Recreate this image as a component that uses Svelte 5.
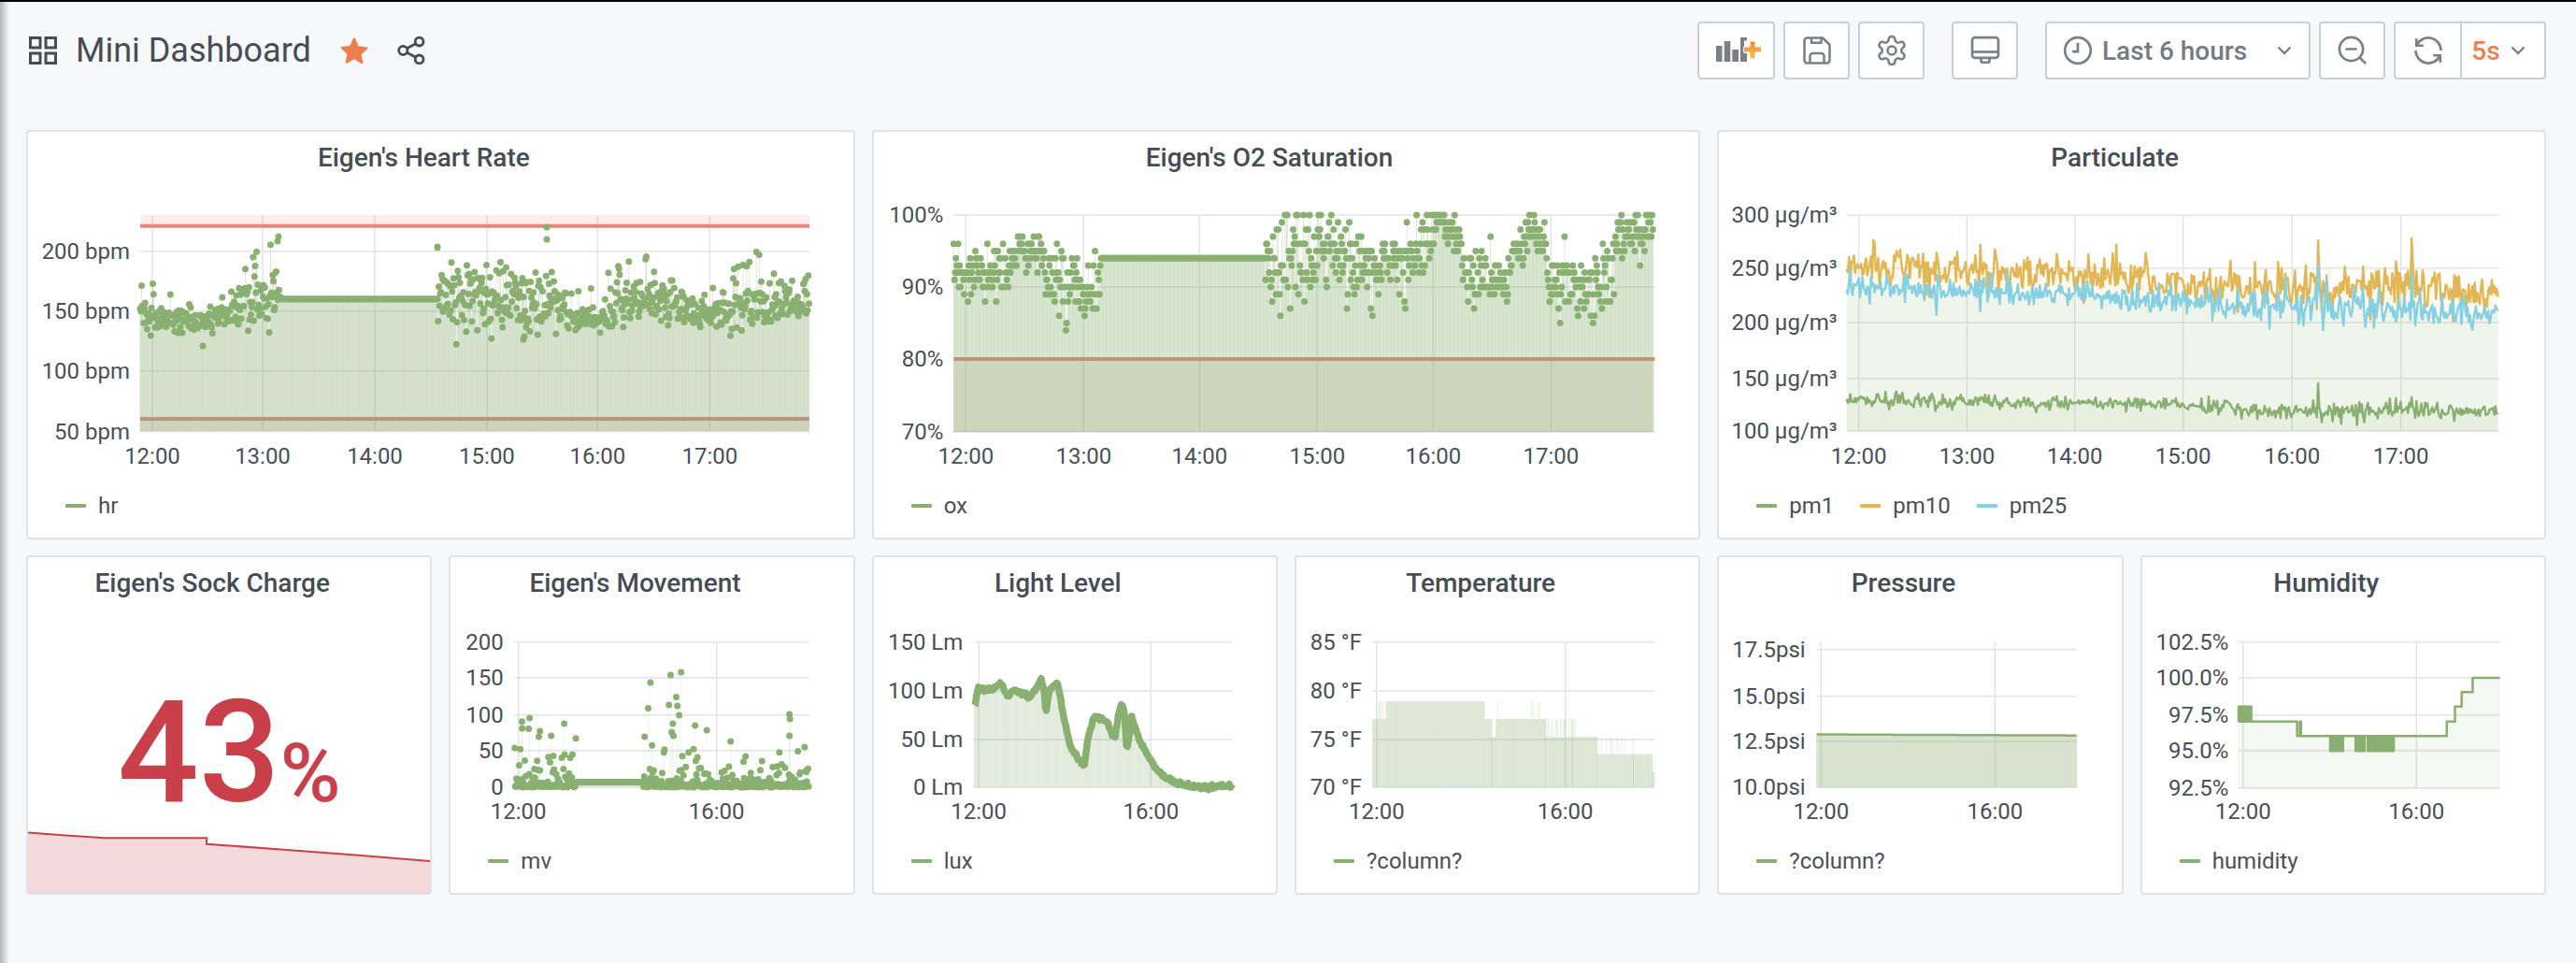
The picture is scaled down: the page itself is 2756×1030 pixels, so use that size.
<script>
  const GREEN = '#89af71'
  const YELLOW = '#e3b655'
  const BLUE = '#85d0e3'
  const FILL = 'rgba(137, 175, 113, 0.3)'
  const LOW_LINE = '#c1927a'
  const LOW_FILL = 'rgba(150, 130, 70, 0.13)'
  const DOT = 7

  const colX = i => 28 + i * 452.333
  const f = n => n.toFixed(1)

  function rng(seed) {
    let a = seed >>> 0
    return () => {
      a = (a + 0x6d2b79f5) >>> 0
      let t = a
      t = Math.imul(t ^ (t >>> 15), t | 1)
      t ^= t + Math.imul(t ^ (t >>> 7), t | 61)
      return ((t ^ (t >>> 14)) >>> 0) / 4294967296
    }
  }

  function gauss(r) {
    return Math.sqrt(-2 * Math.log(r() + 1e-6)) * Math.cos(2 * Math.PI * r())
  }

  // anchors: rows starting with x, the other columns are interpolated
  function at(anchors, x) {
    let i = 1
    while (i < anchors.length - 1 && anchors[i][0] < x) i++
    const a = anchors[i - 1]
    const b = anchors[i]
    const t = b[0] === a[0] ? 0 : Math.min(1, Math.max(0, (x - a[0]) / (b[0] - a[0])))
    return a.map((v, k) => v + (b[k] - v) * t)
  }

  const dots = pts => pts.map(([x, y]) => `M${f(x)} ${f(y)}h0`).join('')
  const bars = (pts, y0) => pts.map(([x, y]) => `M${f(x)} ${y0}V${f(y)}`).join('')
  const line = pts => 'M' + pts.map(([x, y]) => `${f(x)} ${f(y)}`).join('L')
  const area = (pts, y0) => `${line(pts)}L${f(pts[pts.length - 1][0])} ${y0}L${f(pts[0][0])} ${y0}Z`
  const rect = (x0, x1, y0, y1) => `M${x0} ${y0}H${x1}V${y1}H${x0}Z`

  function scatter(seed, anchors, step) {
    const r = rng(seed)
    const pts = []
    const end = anchors[anchors.length - 1][0]
    for (let x = anchors[0][0]; x <= end; x += step) {
      const [, cy, sd, up, p] = at(anchors, x)
      pts.push([x, r() < p ? cy - r() * up : cy + gauss(r) * sd])
    }
    return pts
  }

  function jitterLine(seed, anchors, step, spikes = []) {
    const r = rng(seed)
    const pts = []
    const end = anchors[anchors.length - 1][0]
    for (let x = anchors[0][0]; x <= end; x += step) {
      const [, cy, sd] = at(anchors, x)
      const spike = spikes.find(s => Math.abs(s[0] - x) < step / 2)
      pts.push([x, spike ? spike[1] : cy + gauss(r) * sd])
    }
    return pts
  }

  // Heart rate
  const hrPts = scatter(11, [
    [150, 338, 9, 62, 0.16], [215, 343, 5, 30, 0.04], [261, 327, 11, 55, 0.2], [295, 317, 13, 62, 0.3],
    [301, 320, 0, 0, 0], [468, 320, 0, 0, 0],
    [469, 317, 17, 30, 0.18], [571, 320, 17, 30, 0.2], [594, 333, 13, 45, 0.22], [640, 347, 5, 55, 0.14],
    [663, 327, 11, 50, 0.22], [720, 322, 13, 50, 0.25], [743, 338, 6, 20, 0.06], [789, 332, 11, 60, 0.24],
    [818, 327, 13, 60, 0.24], [835, 327, 10, 20, 0.12], [866, 320, 11, 40, 0.25]
  ], 0.75)
  const hrExtra = [[585, 243], [585, 256], [468, 265], [468, 264], [560, 363], [561, 360], [563, 350], [217, 370], [298, 253], [297, 258]]

  // O2 saturation, whole percents
  const oxY = v => 384 - (v - 80) * 7.7
  const oxR = rng(23)
  const oxAnchors = [
    [1020, 91.5, 2.2], [1079, 92, 2], [1091, 95, 1.5], [1114, 95, 1.5], [1125, 91, 2.5], [1176, 90.5, 2.5],
    [1177, 94, 0], [1352, 94, 0], [1353, 94, 3.3], [1429, 95, 3.5], [1435, 93.5, 2.5], [1504, 92.5, 2.5],
    [1521, 96, 2.5], [1538, 99, 1], [1556, 97, 1.5], [1570, 92, 2], [1613, 90, 2], [1619, 95, 1.5],
    [1636, 98, 1.2], [1653, 95, 1.5], [1662, 90, 2], [1722, 90.5, 2.2], [1731, 97, 2], [1770, 98.5, 1.5]
  ]
  const oxPts = []
  for (let x = 1020; x <= 1768; x += 0.8) {
    const [, c, sd] = at(oxAnchors, x)
    oxPts.push([x, oxY(Math.min(100, Math.round(c + gauss(oxR) * sd)))])
  }

  // Particulate
  const pm10 = jitterLine(31, [[1976, 283, 11], [2104, 290, 10], [2220, 292, 10], [2336, 302, 11], [2440, 312, 14], [2580, 306, 13], [2674, 317, 10]], 1.3, [[2480, 257], [2580, 255]])
  const pm25 = jitterLine(32, [[1976, 307, 7], [2104, 312, 7], [2220, 315, 7], [2336, 322, 8], [2440, 328, 10], [2580, 330, 9], [2674, 335, 7]], 1.3, [[2480, 283], [2580, 292]])
  const pm1 = jitterLine(33, [[1976, 427, 4], [2104, 430, 4], [2220, 431, 3.5], [2336, 433, 4], [2440, 440, 5], [2580, 438, 5], [2674, 440, 4]], 1.3, [[2480, 410], [2580, 425]])

  // Movement
  const mvR = rng(47)
  const mvPts = []
  for (let x = 551; x <= 866; x += 0.6) {
    if (x > 617 && x < 689) {
      mvPts.push([x, 836.7])
      continue
    }
    const scale = x < 617 ? 18 : x < 757 ? 26 : x < 825 ? 7 : 14
    const s = mvR() < 0.55 ? 1.5 : scale
    mvPts.push([x, Math.max(722, 842 + Math.log(mvR() + 1e-6) * s)])
  }
  mvPts.push([729, 719], [716, 754], [725, 755], [567, 768], [604, 774], [845, 764], [845.5, 769], [727, 765], [782, 793], [798, 809], [578, 782], [559, 779], [756.5, 781], [744, 776], [690, 788], [845, 787])

  // Light level
  const lightKnots = [[208, 490], [212, 470], [215, 430], [225, 445], [240, 440], [255, 420], [262, 440], [270, 470], [275, 445], [300, 455], [310, 470], [320, 440], [330, 410], [336, 450], [338, 530], [345, 440], [360, 420], [365, 470], [375, 570], [385, 630], [405, 680], [408, 690], [415, 600], [425, 535], [440, 535], [452, 550], [458, 585], [465, 590], [470, 530], [477, 485], [482, 520], [486, 640], [495, 530], [510, 610], [530, 670], [545, 710], [570, 740], [610, 757], [680, 752]]
    .map(([x, y]) => [920 + x / 1.704, 590 + y / 3, 1.1])
  const lightPts = jitterLine(53, lightKnots, 1.1)

  // Temperature, main level with fainter stripes up to the next one
  const tempR = rng(61)
  const tempZones = [[935, 945, 537, 537, 0], [945, 960, 537, 480, 0.7], [960, 1140, 480, 480, 0], [1140, 1152, 537, 537, 0], [1152, 1160, 595, 595, 0], [1160, 1190, 537, 480, 0.05], [1190, 1250, 537, 480, 0.25], [1250, 1300, 595, 537, 0.6], [1300, 1315, 595, 537, 0.25], [1315, 1345, 595, 595, 0], [1345, 1410, 650, 595, 0.2], [1410, 1445, 650, 650, 0], [1445, 1449, 705, 650, 0.4]]
  const tempPts = []
  let tempAlt = ''
  for (const [a, b, main, alt, p] of tempZones) {
    for (let x = a; x < b; x += 1.7) {
      const px = 920 + x / 1.704
      tempPts.push([px, 590 + main / 3])
      if (tempR() < p) tempAlt += `M${f(px)} ${f(590 + main / 3)}V${f(590 + alt / 3)}`
    }
  }

  // Pressure
  const pressPts = []
  for (let x = 1944; x <= 2222; x += 1) pressPts.push([x, 785.5 + (x - 1944) / 278 * 1.2])

  // Humidity, stepped with solid blocks where it flips between two values
  const humX = x => 1830 + x / 1.693
  const humY = y => 590 + y / 3
  function flip(x0, x1, a, b) {
    const out = []
    for (let x = x0; x < x1; x += 2.2) out.push([x, a], [x, b], [x + 1.1, b], [x + 1.1, a])
    return out
  }
  const humPts = [
    ...flip(956, 980, 545, 497), [1062, 545], [1062, 592], [1067, 592], [1067, 545], [1069, 545], [1069, 592],
    ...flip(1122, 1145, 592, 640), [1168, 592], ...flip(1168, 1185, 592, 640), [1190, 592], ...flip(1190, 1222, 592, 640),
    [1225, 592], ...flip(1225, 1238, 592, 640), [1238, 592], [1333, 592], [1333, 545], [1348, 545], [1348, 497],
    [1360, 497], [1360, 451], [1380, 451], [1380, 405], [1429, 405]
  ].map(([x, y]) => [humX(x), humY(y)])

  const hours = ['12:00', '13:00', '14:00', '15:00', '16:00', '17:00']
  const xTicks = xs => xs.map((x, i) => ({ x, label: xs.length === 2 ? (i ? '16:00' : '12:00') : hours[i] }))

  const topRow = [
    {
      title: "Eigen's Heart Rate", col: 0, span: 2, top: 197, height: 313, labelX: 139, labelY: 488,
      plot: [150, 866, 230, 461.6],
      yTicks: [[268.7, '200 bpm'], [332.7, '150 bpm'], [396.7, '100 bpm'], [461.6, '50 bpm']],
      xTicks: xTicks([163, 281, 401, 521, 639.4, 759.4]),
      layers: [
        { d: bars(hrPts, 461), stroke: FILL, width: 1 },
        { d: rect(150, 866, 230, 242), fill: 'rgba(234, 112, 112, 0.13)' },
        { d: rect(150, 866, 448, 461.6), fill: LOW_FILL },
        { d: `M150 241.7H866`, stroke: '#e5867a', width: 4 },
        { d: `M150 448H866`, stroke: LOW_LINE, width: 4 },
        { d: dots(hrPts.concat(hrExtra)), stroke: GREEN, width: DOT, cap: 'round' }
      ],
      legend: [{ name: 'hr', color: GREEN }]
    },
    {
      title: "Eigen's O2 Saturation", col: 2, span: 2, top: 197, height: 313, labelX: 1009, labelY: 488,
      plot: [1020, 1770, 230, 462],
      yTicks: [[230, '100%'], [307, '90%'], [384, '80%'], [462, '70%']],
      xTicks: xTicks([1033, 1159, 1283, 1409, 1533, 1659]),
      layers: [
        { d: bars(oxPts, 462), stroke: FILL, width: 1 },
        { d: rect(1020, 1770, 384, 462), fill: LOW_FILL },
        { d: `M1020 384H1770`, stroke: LOW_LINE, width: 4 },
        { d: dots(oxPts), stroke: GREEN, width: DOT, cap: 'round' }
      ],
      legend: [{ name: 'ox', color: GREEN }]
    },
    {
      title: 'Particulate', col: 4, span: 2, top: 197, height: 313, labelX: 1966, labelY: 488,
      plot: [1976, 2674, 230.3, 461],
      yTicks: [[230.3, '300 µg/m³'], [286.7, '250 µg/m³'], [345, '200 µg/m³'], [404.7, '150 µg/m³'], [461, '100 µg/m³']],
      xTicks: xTicks([1989, 2104.7, 2220, 2336, 2452.6, 2569]),
      layers: [
        { d: area(pm1, 461), fill: 'rgba(126, 178, 109, 0.09)' },
        { d: area(pm10, 461), fill: 'rgba(234, 184, 57, 0.09)' },
        { d: area(pm25, 461), fill: 'rgba(110, 208, 224, 0.09)' },
        { d: line(pm1), stroke: GREEN, width: 2.4 },
        { d: line(pm10), stroke: YELLOW, width: 2.4 },
        { d: line(pm25), stroke: BLUE, width: 2.4 }
      ],
      legend: [{ name: 'pm1', color: GREEN }, { name: 'pm10', color: YELLOW }, { name: 'pm25', color: BLUE }]
    }
  ]

  const bottomRow = [
    {
      title: "Eigen's Movement", col: 1, span: 1, top: 652, height: 238, labelX: 539, labelY: 868,
      plot: [551, 866, 686.7, 842.3],
      yTicks: [[686.7, '200'], [725, '150'], [764.7, '100'], [802.7, '50'], [842.3, '0']],
      xTicks: xTicks([555, 767]),
      layers: [
        { d: bars(mvPts, 842), stroke: 'rgba(137, 175, 113, 0.1)', width: 1 },
        { d: dots(mvPts), stroke: GREEN, width: DOT, cap: 'round' }
      ],
      legend: [{ name: 'mv', color: GREEN }]
    },
    {
      title: 'Light Level', col: 2, span: 1, top: 652, height: 238, labelX: 1030, labelY: 868,
      plot: [1042, 1318, 686.7, 842.3],
      yTicks: [[686.7, '150 Lm'], [739, '100 Lm'], [791, '50 Lm'], [842.3, '0 Lm']],
      xTicks: xTicks([1046.8, 1231]),
      layers: [
        { d: bars(lightPts, 842), stroke: 'rgba(137, 175, 113, 0.27)', width: 1 },
        { d: line(lightPts), stroke: GREEN, width: 7.5 }
      ],
      legend: [{ name: 'lux', color: GREEN }]
    },
    {
      title: 'Temperature', col: 3, span: 1, top: 652, height: 238, labelX: 1457, labelY: 868,
      plot: [1468.7, 1770, 686.7, 842.3],
      yTicks: [[686.7, '85 °F'], [739, '80 °F'], [791, '75 °F'], [842.3, '70 °F']],
      xTicks: xTicks([1472.8, 1674.7]),
      layers: [
        { d: bars(tempPts, 842), stroke: 'rgba(137, 175, 113, 0.3)', width: 1 },
        { d: tempAlt, stroke: 'rgba(137, 175, 113, 0.16)', width: 1 }
      ],
      legend: [{ name: '?column?', color: GREEN }]
    },
    {
      title: 'Pressure', col: 4, span: 1, top: 652, height: 238, labelX: 1932, labelY: 868,
      plot: [1944, 2222, 686.7, 842.3],
      yTicks: [[694.7, '17.5psi'], [744.7, '15.0psi'], [792.7, '12.5psi'], [842.3, '10.0psi']],
      xTicks: xTicks([1948.7, 2134.8]),
      layers: [
        { d: bars(pressPts, 842), stroke: 'rgba(137, 175, 113, 0.36)', width: 1 },
        { d: line(pressPts), stroke: GREEN, width: 2.5 }
      ],
      legend: [{ name: '?column?', color: GREEN }]
    },
    {
      title: 'Humidity', col: 5, span: 1, top: 652, height: 238, labelX: 2384, labelY: 868,
      plot: [2394.7, 2674, 686.7, 843],
      yTicks: [[686.7, '102.5%'], [725, '100.0%'], [764.7, '97.5%'], [802.7, '95.0%'], [843, '92.5%']],
      xTicks: xTicks([2399.4, 2584.9]),
      layers: [
        { d: area(humPts, 843), fill: 'rgba(137, 175, 113, 0.09)' },
        { d: line(humPts), stroke: GREEN, width: 2.5 }
      ],
      legend: [{ name: 'humidity', color: GREEN }]
    }
  ]

  const sockLine = [[30, 890.5], [70, 893.5], [112, 896.3], [221, 896.3], [221, 902.7], [300, 908.5], [380, 914.5], [461, 921]]
</script>

{#snippet graph(p)}
  <section class="panel" class:wide={p.span === 2}>
    <h2 class="panel-title">{p.title}</h2>
    <svg class="chart" style="height: {p.height}px" viewBox="{colX(p.col) + 2} {p.top} {p.span === 2 ? 882.67 : 430.33} {p.height}">
      {#each p.yTicks as [y]}
        <path d="M{p.plot[0]} {y}H{p.plot[1]}" class="grid-h" />
      {/each}
      {#each p.xTicks as t}
        <path d="M{t.x} {p.plot[2]}V{p.plot[3]}" class="grid-v" />
      {/each}
      {#each p.layers as l}
        <path d={l.d} fill={l.fill || 'none'} stroke={l.stroke || 'none'} stroke-width={l.width || 0} stroke-linecap={l.cap || 'butt'} stroke-linejoin="round" />
      {/each}
      {#each p.yTicks as [y, label]}
        <text x={p.labelX} {y} text-anchor="end" dominant-baseline="central">{label}</text>
      {/each}
      {#each p.xTicks as t}
        <text x={t.x} y={p.labelY} text-anchor="middle" dominant-baseline="central">{t.label}</text>
      {/each}
    </svg>
    <div class="legend">
      {#each p.legend as item}
        <span class="legend-item">
          <i style="background: {item.color}"></i>{item.name}
        </span>
      {/each}
    </div>
  </section>
{/snippet}

<div class="page">
  <header class="toolbar">
    <div class="title-group">
      <svg class="grid-icon" width="30" height="30" viewBox="0 0 30 30" fill="none" stroke="#464c54" stroke-width="3">
        <rect x="1.5" y="1.5" width="10.5" height="10.5" /><rect x="18" y="1.5" width="10.5" height="10.5" />
        <rect x="1.5" y="18" width="10.5" height="10.5" /><rect x="18" y="18" width="10.5" height="10.5" />
      </svg>
      <h1>Mini Dashboard</h1>
      <svg class="star" width="32" height="30" viewBox="0 0 32 30">
        <path d="M16 2.5l4 8.8 9.5 1.1-7 6.5 1.9 9.4L16 23.1l-8.4 4.7 1.9-9.4-7-6.5 9.5-1.1z" fill="#ed7f4c" stroke="#ed7f4c" stroke-width="2" stroke-linejoin="round" />
      </svg>
      <svg class="share" width="30" height="30" viewBox="0 0 30 30" fill="none" stroke="#464c54" stroke-width="2.8">
        <circle cx="6.3" cy="15" r="4.6" /><circle cx="23.6" cy="5.6" r="4.4" /><circle cx="23.6" cy="24.4" r="4.4" />
        <path d="M10.4 12.8l9.3-5M10.4 17.2l9.3 5" />
      </svg>
    </div>
    <div class="actions">
      <button class="btn add" type="button" aria-label="Add panel">
        <svg width="50" height="28" viewBox="0 0 50 28">
          <defs><linearGradient id="plus" x1="0" y1="0" x2="0" y2="1"><stop offset="0" stop-color="#f08a3c" /><stop offset="1" stop-color="#f6c04a" /></linearGradient></defs>
          <path d="M0 9h6.5v17H0zM8.7 4h6.6v22H8.7zM17.3 13H24v13h-6.7zM26 0h7v3.5h-3V17h3v9h-7z" fill="#7b8087" />
          <path d="M36 4h6v6h6.5v6H42v7h-6v-7h-6.5v-6H36z" fill="url(#plus)" stroke="#fff" stroke-width="1" />
        </svg>
      </button>
      <button class="btn" type="button" aria-label="Save">
        <svg width="36" height="36" viewBox="0 0 24 24" fill="none" stroke="#7b8087" stroke-width="1.7" stroke-linejoin="round">
          <path d="M5 3h11l5 5v11a2 2 0 0 1-2 2H5a2 2 0 0 1-2-2V5a2 2 0 0 1 2-2z" /><path d="M8 3v3.5h7V3" /><path d="M7 21v-5a2 2 0 0 1 2-2h6a2 2 0 0 1 2 2v5" />
        </svg>
      </button>
      <button class="btn" type="button" aria-label="Settings">
        <svg width="36" height="36" viewBox="0 0 24 24" fill="none" stroke="#7b8087" stroke-width="1.7" stroke-linejoin="round">
          <path d="M12.22 2h-.44a2 2 0 0 0-2 2v.18a2 2 0 0 1-1 1.73l-.43.25a2 2 0 0 1-2 0l-.15-.08a2 2 0 0 0-2.73.73l-.22.38a2 2 0 0 0 .73 2.73l.15.1a2 2 0 0 1 1 1.72v.51a2 2 0 0 1-1 1.74l-.15.09a2 2 0 0 0-.73 2.73l.22.38a2 2 0 0 0 2.73.73l.15-.08a2 2 0 0 1 2 0l.43.25a2 2 0 0 1 1 1.73V20a2 2 0 0 0 2 2h.44a2 2 0 0 0 2-2v-.18a2 2 0 0 1 1-1.73l.43-.25a2 2 0 0 1 2 0l.15.08a2 2 0 0 0 2.73-.73l.22-.39a2 2 0 0 0-.73-2.73l-.15-.08a2 2 0 0 1-1-1.74v-.5a2 2 0 0 1 1-1.74l.15-.09a2 2 0 0 0 .73-2.73l-.22-.38a2 2 0 0 0-2.73-.73l-.15.08a2 2 0 0 1-2 0l-.43-.25a2 2 0 0 1-1-1.73V4a2 2 0 0 0-2-2z" />
          <circle cx="12" cy="12" r="3" />
        </svg>
      </button>
      <button class="btn cycle" type="button" aria-label="Cycle view mode">
        <svg width="36" height="36" viewBox="0 0 24 24" fill="none" stroke="#7b8087" stroke-width="1.8" stroke-linejoin="round">
          <rect x="2.7" y="2.7" width="18.6" height="14.6" rx="2" /><path d="M2.7 13h18.6" /><path d="M9 17.3v2a1.2 1.2 0 0 0 1.2 1.2h3.6a1.2 1.2 0 0 0 1.2-1.2v-2" />
        </svg>
      </button>
      <button class="btn time" type="button">
        <svg width="36" height="36" viewBox="0 0 24 24" fill="none" stroke="#7b8087" stroke-width="1.8">
          <circle cx="12" cy="12" r="9.2" /><path d="M12 6.5v6.2H8" />
        </svg>
        <span>Last 6 hours</span>
        <svg class="chev" width="16" height="10" viewBox="0 0 16 10" fill="none" stroke="#7b8087" stroke-width="2.4"><path d="M1.5 1.5L8 8l6.5-6.5" /></svg>
      </button>
      <button class="btn" type="button" aria-label="Zoom out">
        <svg width="36" height="36" viewBox="0 0 24 24" fill="none" stroke="#7b8087" stroke-width="1.8">
          <circle cx="11" cy="11" r="8.4" /><path d="M7 11h8M17 17l4.4 4.4" />
        </svg>
      </button>
      <div class="refresh">
        <button class="btn-part" type="button" aria-label="Refresh">
          <svg width="36" height="36" viewBox="0 0 24 24" fill="none" stroke="#7b8087" stroke-width="1.8">
            <path d="M3.7 8.5A9 9 0 0 1 21 12" /><path d="M20.3 15.5A9 9 0 0 1 3 12" /><path d="M3.5 3.5v5h5" /><path d="M20.5 20.5v-5h-5" />
          </svg>
        </button>
        <button class="btn-part interval" type="button">
          <span>5s</span>
          <svg width="16" height="10" viewBox="0 0 16 10" fill="none" stroke="#7b8087" stroke-width="2.4"><path d="M1.5 1.5L8 8l6.5-6.5" /></svg>
        </button>
      </div>
    </div>
  </header>

  <main class="grid">
    {#each topRow as p}
      {@render graph(p)}
    {/each}

    <section class="panel stat">
      <h2 class="panel-title">Eigen's Sock Charge</h2>
      <div class="stat-value">43<small>%</small></div>
      <svg class="spark" viewBox="30 885 430.33 70">
        <path d={area(sockLine, 955)} fill="rgba(201, 64, 74, 0.2)" />
        <path d={line(sockLine)} fill="none" stroke="#c9404a" stroke-width="2" />
      </svg>
    </section>
    {#each bottomRow as p}
      {@render graph(p)}
    {/each}
  </main>
</div>

<style>
  :global(body) {
    background: #f7f8fa;
  }

  .page {
    position: relative;
    height: 1030px;
    box-sizing: border-box;
    border-top: 2px solid #000;
    overflow: hidden;
    font-family: Roboto, "Liberation Sans", sans-serif;
    color: #464c54;
  }

  .page::before {
    content: '';
    position: absolute;
    left: 0;
    top: 0;
    bottom: 0;
    width: 10px;
    background: linear-gradient(to right, rgba(0, 0, 0, 0.28), rgba(0, 0, 0, 0));
  }

  .toolbar {
    display: flex;
    align-items: center;
    justify-content: space-between;
    height: 104px;
    padding: 0 32px 0 31px;
  }

  .title-group {
    display: flex;
    align-items: center;
  }

  h1 {
    margin: 0 30px 0 20px;
    font-size: 36px;
    font-weight: 400;
    line-height: 44px;
  }

  .star {
    margin-right: 30px;
  }

  .actions {
    display: flex;
    align-items: center;
    gap: 9px;
  }

  .btn,
  .refresh {
    box-sizing: border-box;
    height: 62px;
    background: #fff;
    border: 2px solid #c7d0d9;
    border-radius: 4px;
  }

  .btn {
    display: flex;
    align-items: center;
    justify-content: center;
    width: 71px;
    padding: 0;
    font-family: inherit;
  }

  .add {
    width: 83px;
  }

  .add svg {
    margin-left: 6px;
  }

  .cycle {
    margin: 0 20px;
  }

  .time {
    justify-content: flex-start;
    width: 284px;
    padding-left: 15px;
    color: #767b83;
    font-size: 28px;
    font-weight: 500;
  }

  .time span {
    margin-left: 8px;
  }

  .chev {
    margin-left: auto;
    margin-right: 18px;
  }

  .refresh {
    display: flex;
    width: 163px;
  }

  .btn-part {
    display: flex;
    align-items: center;
    justify-content: center;
    width: 69px;
    padding: 0;
    background: none;
    border: 0;
    font-family: inherit;
  }

  .interval {
    flex: 1;
    gap: 11px;
    padding-right: 10px;
    border-left: 2px solid #c7d0d9;
    color: #ed7f4c;
    font-size: 28px;
    font-weight: 500;
  }

  .grid {
    display: grid;
    grid-template-columns: repeat(6, 1fr);
    grid-template-rows: 438px 363px;
    gap: 17px 18px;
    padding: 33px 32px 0 28px;
  }

  .panel {
    position: relative;
    box-sizing: border-box;
    min-width: 0;
    background: #fff;
    border: 2px solid #dfe3e9;
    border-radius: 4px;
    overflow: hidden;
  }

  .wide {
    grid-column: span 2;
  }

  .panel-title {
    height: 56px;
    margin: 0;
    padding-right: 36px;
    font-size: 28px;
    font-weight: 500;
    line-height: 56px;
    text-align: center;
    color: #464c54;
  }

  .chart {
    display: block;
    width: 100%;
  }

  .chart text {
    font-size: 24px;
    fill: #4a4f57;
  }

  .grid-h {
    fill: none;
    stroke: #e8e9ec;
    stroke-width: 2;
  }

  .grid-v {
    fill: none;
    stroke: #e2e3e6;
    stroke-width: 1.5;
  }

  .legend {
    display: flex;
    align-items: center;
    gap: 28px;
    height: 62px;
    padding-left: 40px;
    font-size: 24px;
    color: #4a4f57;
  }

  .legend-item {
    display: flex;
    align-items: center;
  }

  .legend-item i {
    width: 22px;
    height: 4px;
    margin-right: 13px;
    border-radius: 1px;
  }

  .stat-value {
    display: flex;
    align-items: baseline;
    justify-content: center;
    margin-top: 76px;
    color: #c9404a;
    font-size: 153px;
    font-weight: 500;
    line-height: 153px;
  }

  .stat-value small {
    font-size: 88px;
    font-weight: 500;
  }

  .spark {
    position: absolute;
    left: 0;
    bottom: 0;
    width: 100%;
    height: 70px;
  }
</style>
